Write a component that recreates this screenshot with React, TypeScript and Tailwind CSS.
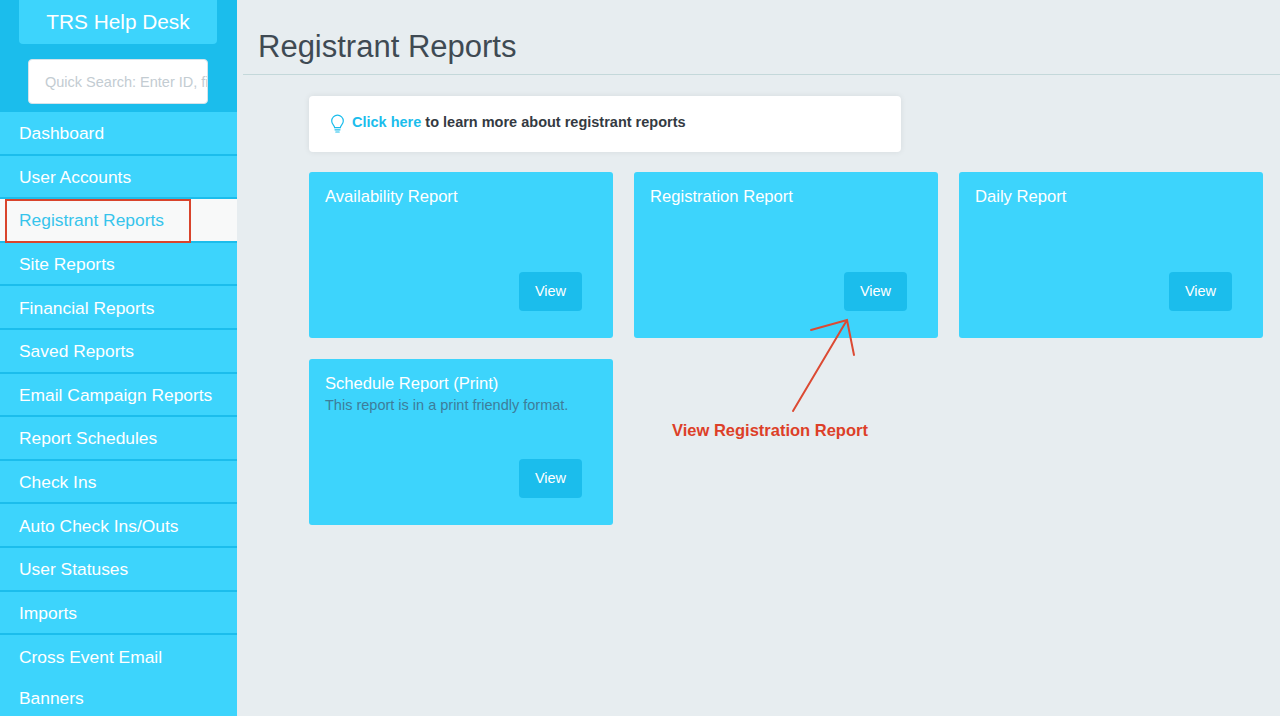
const navItems = [
  'Dashboard',
  'User Accounts',
  'Registrant Reports',
  'Site Reports',
  'Financial Reports',
  'Saved Reports',
  'Email Campaign Reports',
  'Report Schedules',
  'Check Ins',
  'Auto Check Ins/Outs',
  'User Statuses',
  'Imports',
  'Cross Event Email',
  'Banners',
];

const reports = [
  { title: 'Availability Report' },
  { title: 'Registration Report' },
  { title: 'Daily Report' },
  { title: 'Schedule Report (Print)', note: 'This report is in a print friendly format.' },
];

function ReportCard({ title, note }: { title: string; note?: string }) {
  return (
    <div className="relative h-[166px] rounded-[3px] bg-[#3dd4fc] px-4 pt-[14px]">
      <div className="text-[16.6px] leading-[22px] text-white">{title}</div>
      {note && <div className="text-[14.5px] leading-[21px] text-[#3d7d9a]">{note}</div>}
      <button className="absolute bottom-[27px] right-[31px] h-[39px] w-[63px] rounded-[4px] bg-[#1bbdec] text-[14.5px] text-white">
        View
      </button>
    </div>
  );
}

export default function App() {
  return (
    <div className="flex h-[716px] w-[1280px] overflow-hidden bg-[#e7edf0] font-['Liberation_Sans',Arial,sans-serif]">
      <aside className="w-[237px] shrink-0 overflow-hidden bg-[#3dd4fc]">
        <div className="flex h-[112px] flex-col items-start bg-[#1bbdec] pl-[19px]">
          <div className="flex h-[44px] w-[198px] items-center justify-center rounded-b-[4px] bg-[#3dd4fc] text-[20.8px] text-white">
            TRS Help Desk
          </div>
          <input
            readOnly
            placeholder="Quick Search: Enter ID, first name"
            className="ml-[9px] mt-[15px] h-[45px] w-[180px] rounded-[4px] border border-[#d5e3ea] bg-white pl-[16px] text-[14.5px] placeholder:text-[#c3ccd2]"
          />
        </div>
        <nav>
          {navItems.map((item) => {
            const active = item === 'Registrant Reports';
            const last = item === 'Cross Event Email' || item === 'Banners';
            return (
              <div
                key={item}
                className={`flex h-[43.6px] items-center pl-[19px] text-[17.4px] ${
                  active ? 'bg-[#f8f9f9] text-[#36c4ec]' : 'text-white'
                } ${last ? '' : 'border-b-2 border-[#1bbdec] pt-[1px]'} ${item === 'Banners' ? 'pb-[4px]' : ''}`}
              >
                {item}
              </div>
            );
          })}
        </nav>
      </aside>

      <main className="relative flex-1">
        <header className="ml-[6px] flex h-[75px] items-end border-b border-[#c4d8da] pb-[4px] pl-[15px]">
          <h1 className="text-[31px] font-normal text-[#3f4a53]">Registrant Reports</h1>
        </header>

        <div className="ml-[72px] mt-[21px] w-[954px]">
          <div className="flex h-[56px] w-[592px] items-center rounded-[4px] bg-white pl-[20px] text-[14.5px] font-bold text-[#343a42] shadow-[0_0_6px_rgba(0,0,0,0.08)]">
            <svg className="mr-[6px]" width="17" height="22" viewBox="0 0 17 22" fill="none" stroke="#1bbdec" strokeWidth="1.2" strokeLinecap="round">
              <path d="M5.6 14.6c0-2-2.9-3.2-2.9-6.6a5.8 5.8 0 0 1 11.6 0c0 3.4-2.9 4.6-2.9 6.6z" />
              <path d="M6 16.8h5M6.8 19h3.4" />
            </svg>
            <span className="mb-[3px] text-[#1bbdec]">Click here</span>
            <span className="mb-[3px] ml-[4px]">to learn more about registrant reports</span>
          </div>

          <div className="mt-[20px] grid grid-cols-3 gap-[21px]">
            {reports.map((report) => (
              <ReportCard key={report.title} title={report.title} note={report.note} />
            ))}
          </div>
        </div>

        <svg className="absolute left-[553px] top-[315px]" width="70" height="100" viewBox="0 0 70 100" fill="none" stroke="#dc4a33" strokeWidth="2" strokeLinecap="round">
          <path d="M3 96L57 5M21 15L57 5L64 40" />
        </svg>
        <div className="absolute left-[435px] top-[418px] text-[16.5px] font-bold text-[#dd3f28]">View Registration Report</div>
      </main>

      <div className="absolute left-[5px] top-[199px] h-[44px] w-[186px] border-2 border-[#d9442c]" />
    </div>
  );
}
